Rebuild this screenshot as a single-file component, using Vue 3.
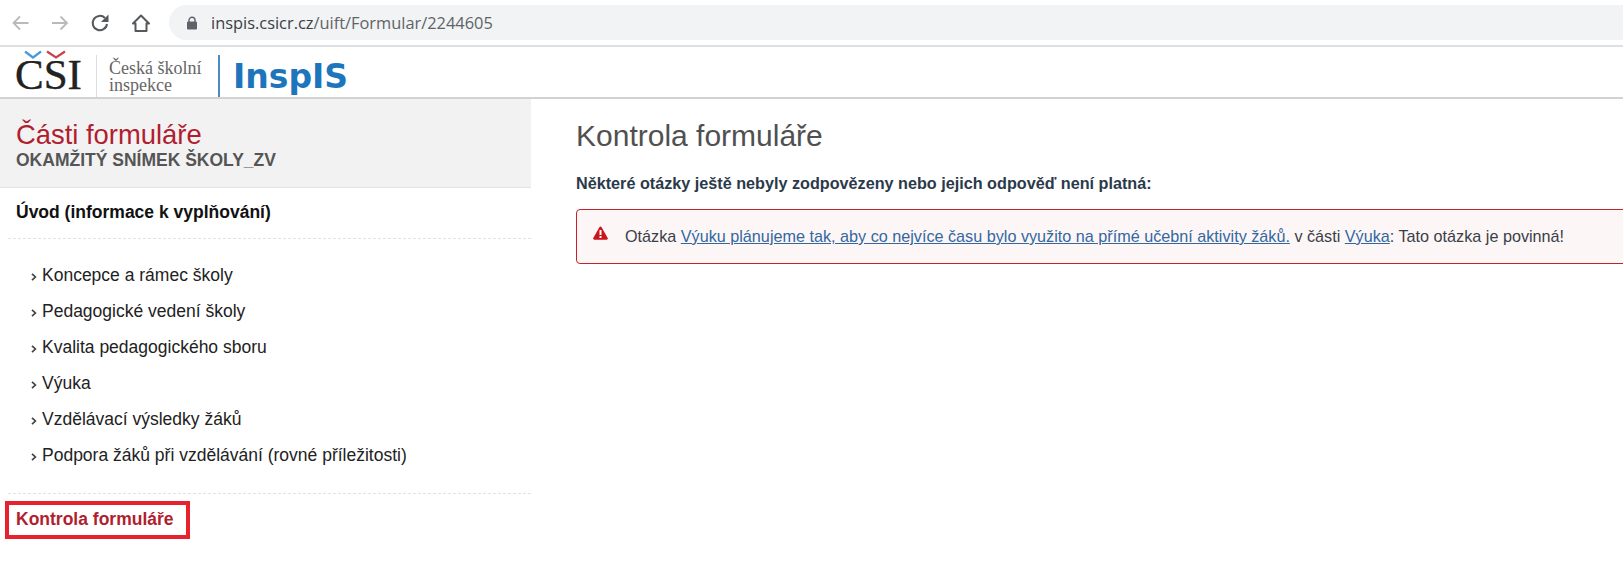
<script setup>
const items = [
  'Koncepce a rámec školy',
  'Pedagogické vedení školy',
  'Kvalita pedagogického sboru',
  'Výuka',
  'Vzdělávací výsledky žáků',
  'Podpora žáků při vzdělávání (rovné příležitosti)'
]
</script>

<template>
  <div class="page">
    <div class="toolbar">
      <svg class="nav back" width="20" height="20" viewBox="0 0 20 20"><path d="M18.500 10H3.500M10 3.500 3.500 10l6.500 6.500" fill="none" stroke="#b8babd" stroke-width="1.800"/></svg>
      <svg class="nav fwd" width="20" height="20" viewBox="0 0 20 20"><path d="M2 10h15M10.500 3.500 17 10l-6.500 6.500" fill="none" stroke="#b8babd" stroke-width="1.800"/></svg>
      <svg class="nav reload" width="20" height="20" viewBox="0 0 20 20"><path d="M17 11a7.200 7.200 0 1 1-2-6" fill="none" stroke="#55585c" stroke-width="2"/><path d="M18.500 1.500v7.500H11z" fill="#55585c"/></svg>
      <svg class="nav home" width="20" height="20" viewBox="0 0 20 20"><path d="M2 10.500 10 2.500l8 8h-2.500v7.500h-11v-7.500z" fill="none" stroke="#55585c" stroke-width="2" stroke-linejoin="round"/></svg>
      <div class="omnibox">
        <svg width="12" height="14" viewBox="0 0 12 14"><path d="M3 6V4.300a3 3 0 0 1 6 0V6" fill="none" stroke="#5f6368" stroke-width="1.400"/><rect x="1" y="5.500" width="10" height="8" rx="1.200" fill="#5f6368"/></svg>
        <span class="url"><span class="domain">inspis.csicr.cz</span>/uift/Formular/2244605</span>
      </div>
    </div>

    <header class="brand">
      <div class="csi">
        <span class="csi-text">ČŠI</span>
        <svg class="chev" width="50" height="11" viewBox="0 0 50 11"><rect width="50" height="11" fill="#fff"/><path d="M5 1.500 13 7.500 21 1.500" fill="none" stroke="#4a9ad8" stroke-width="2.200"/><path d="M27 1.500 36 7.500 45 1.500" fill="none" stroke="#c9414b" stroke-width="2.200"/></svg>
      </div>
      <div class="school">Česká školní<br />inspekce</div>
      <div class="insp">InspIS</div>
    </header>

    <div class="body">
      <aside class="side">
        <div class="side-head">
          <div class="side-title">Části formuláře</div>
          <div class="side-sub">OKAMŽITÝ SNÍMEK ŠKOLY_ZV</div>
        </div>
        <div class="intro">Úvod (informace k vyplňování)</div>
        <ul class="list">
          <li v-for="item in items" :key="item">
            <svg class="arrow" width="6" height="8" viewBox="0 0 6 8"><path d="M1 .8 4.400 4 1 7.200" fill="none" stroke="#444" stroke-width="1.700"/></svg>
            <span>{{ item }}</span>
          </li>
        </ul>
        <div class="check"><span>Kontrola formuláře</span></div>
      </aside>
      <main class="main">
        <h1>Kontrola formuláře</h1>
        <p class="note">Některé otázky ještě nebyly zodpovězeny nebo jejich odpověď není platná:</p>
        <div class="alert">
          <svg width="15" height="14" viewBox="0 0 15 14"><path d="M7.500.5c.5 0 .9.300 1.100.7l6.100 10.700c.5.800-.1 1.800-1.100 1.800H1.400c-1 0-1.600-1-1.100-1.800L6.400 1.200c.2-.4.600-.7 1.100-.7z" fill="#c9151b"/><rect x="6.500" y="4" width="2" height="5" fill="#fff"/><rect x="6.500" y="10" width="2" height="2" fill="#fff"/></svg>
          <span>Otázka <a>Výuku plánujeme tak, aby co nejvíce času bylo využito na přímé učební aktivity žáků.</a> v části <a>Výuka</a>: Tato otázka je povinná!</span>
        </div>
      </main>
    </div>
  </div>
</template>

<style>
html, body { margin: 0; background: #fff; overflow: hidden; }
</style>

<style scoped>
.page { width: 1623px; height: 583px; overflow: hidden; font-family: "Liberation Sans", Arial, sans-serif; display: flex; flex-direction: column; }
.toolbar { box-sizing: border-box; padding-top: 5px; display: flex; align-items: flex-start; border-bottom: 2px solid #dedfe1; flex: none; height: 47px; }
.nav { margin-top: 8px; flex: none; }
.back { margin-left: 10px; }
.fwd { margin-left: 20px; }
.reload { margin-left: 20px; }
.home { margin-left: 21px; }
.omnibox { margin-left: 18px; flex: 1; height: 35px; background: #f1f3f4; border-radius: 18px 0 0 18px; display: flex; align-items: center; padding-left: 17px; }
.url { margin-left: 13px; font-family: "Open Sans", sans-serif; font-size: 16.400px; color: #5f6368; }
.domain { color: #3c4043; }
.brand { height: 50px; flex: none; display: flex; border-bottom: 2px solid #d2d2d2; }
.csi { position: relative; width: 81px; margin-left: 15px; margin-top: 8px; height: 42px; border-right: 1px solid #ddd; flex: none; }
.chev { position: absolute; left: 5px; top: -5px; }
.csi-text { position: absolute; left: 0; top: -3px; font-family: "Liberation Serif", serif; font-size: 43px; line-height: 46px; color: #222; -webkit-text-stroke: .4px #222; }
.school { width: 111px; margin-left: 12px; margin-top: 8px; font-family: "Liberation Serif", serif; font-size: 18px; line-height: 17px; color: #666; border-right: 2px solid #4b8cc0; padding-top: 5px; box-sizing: border-box; height: 42px; }
.insp { margin-left: 13px; margin-top: 10px; font-family: "DejaVu Sans", sans-serif; font-weight: 700; font-size: 33px; line-height: 40px; color: #1d75bb; }
.body { flex: 1; display: flex; min-height: 0; }
.side { width: 531px; flex: none; }
.side-head { height: 89px; background: #f2f2f2; box-sizing: border-box; padding: 21px 16px 0; border-bottom: 1px solid #e4e4e4; }
.side-title { font-size: 27.400px; line-height: 30px; color: #b01e2f; }
.side-sub { font-size: 17.500px; line-height: 20px; font-weight: 700; color: #555; }
.intro { margin-left: 8px; padding: 0 8px; height: 51px; line-height: 49px; box-sizing: border-box; font-size: 17.500px; font-weight: 700; color: #111; border-bottom: 1px dashed #e2e2e2; }
.list { list-style: none; margin: 0 0 0 8px; padding: 18px 0 20px 0; border-bottom: 1px dashed #e2e2e2; }
.list li { height: 36px; line-height: 36px; font-size: 17.500px; color: #222; padding-left: 23px; display: flex; align-items: center; }
.arrow { width: 6px; margin: 3px 5px 0 0; flex: none; }
.check { margin: 7px 0 0 5px; width: 185px; height: 38px; box-sizing: border-box; border: 4px solid #e8212e; padding-left: 7px; font-size: 17.500px; line-height: 29px; font-weight: 700; color: #b01e2f; }
.main { flex: 1; min-width: 0; padding-left: 45px; }
h1 { margin: 19px 0 0; font-size: 30px; line-height: 36px; font-weight: 400; color: #505050; }
.note { margin: 19px 0 0; font-size: 16.200px; line-height: 20px; font-weight: 700; color: #2b3a4a; }
.alert { margin: 16px -10px 0 0; height: 55px; box-sizing: border-box; border: 1px solid #c5222c; border-radius: 4px; background: #fdf6f7; display: flex; align-items: center; padding-left: 16px; font-size: 16.200px; color: #3a3f47; }
.alert svg { margin-top: -7px; margin-right: 17px; flex: none; }
.alert a { color: #33689e; text-decoration: underline; }
</style>
